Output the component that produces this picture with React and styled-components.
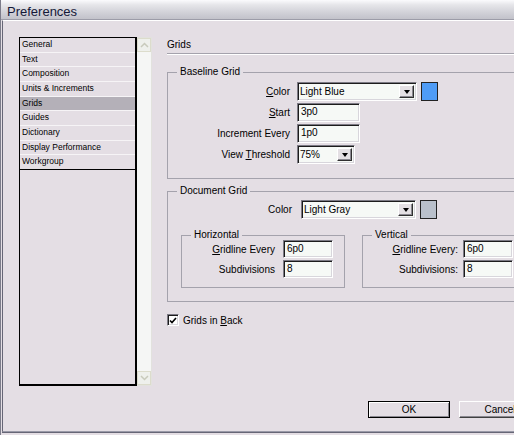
import React from 'react';
import styled, { createGlobalStyle, css } from 'styled-components';

const BG = '#e4dee4';

const GlobalStyle = createGlobalStyle`
  html, body {
    margin: 0;
    padding: 0;
    background: ${BG};
    overflow: hidden;
  }
  body {
    font-family: "Liberation Sans", Arial, sans-serif;
    color: #000;
  }
`;

const sunken = css`
  box-sizing: border-box;
  border-style: solid;
  border-width: 1px;
  border-color: #7c7a84 #ffffff #ffffff #7c7a84;
  box-shadow: inset 1px 1px 0 #1c1c1c, inset -1px -1px 0 #d8d6dc;
`;

const Window = styled.div`
  width: 560px;
  height: 435px;
  box-sizing: border-box;
  display: flex;
  flex-direction: column;
  border-left: 1px solid #7c7c8a;
  background: ${BG};
`;

const TitleBar = styled.div`
  height: 20px;
  flex: none;
  box-sizing: border-box;
  padding: 3px 0 0 6px;
  font-size: 13px;
  line-height: 17px;
  color: #141838;
  background: linear-gradient(#fbfbfd 0%, #e6e6ea 25%, #d4d4da 60%, #c2c2ca 100%);
  border-bottom: 1px solid #9c9ca8;
`;

const Frame = styled.div`
  height: 412px;
  flex: none;
  box-sizing: border-box;
  margin-left: 1px;
  display: flex;
  flex-direction: column;
  border-top: 1px solid #ffffff;
  border-left: 1px solid #666676;
  border-bottom: 1px solid #9a9aa8;
  box-shadow: 0 1px 0 #666676;
`;

const Body = styled.div`
  display: flex;
  padding: 16px 0 0 16px;
`;

const Sidebar = styled.div`
  display: flex;
  height: 349px;
  flex: none;
`;

const List = styled.ul`
  width: 118px;
  margin: 0;
  padding: 0;
  list-style: none;
  box-sizing: border-box;
  border: 1px solid #000;
  border-right-width: 2px;
  border-bottom-width: 2px;
`;

const Item = styled.li`
  height: 13.67px;
  line-height: 13.67px;
  padding-left: 2px;
  font-size: 8.5px;
  white-space: nowrap;
  border-bottom: 1px solid ${(p) => (p.$last ? '#000' : '#f6f4f6')};
  background: ${(p) => (p.$selected ? '#b4b0b8' : 'transparent')};
`;

const ScrollBar = styled.div`
  width: 15px;
  box-sizing: border-box;
  display: flex;
  flex-direction: column;
  justify-content: space-between;
  background: #f5f6f5;
  border: 1px solid #e2e2de;
  border-left: none;
`;

const ScrollArrow = styled.div`
  height: 14px;
  display: flex;
  align-items: center;
  justify-content: center;
  background: #eef0ec;
  border: 1px solid #dcdccc;
  box-sizing: border-box;
`;

const Panel = styled.div`
  width: 374px;
  margin-left: 15px;
  display: flex;
  flex-direction: column;
`;

const PanelTitle = styled.div`
  height: 16px;
  font-size: 10px;
  line-height: 15px;
  border-bottom: 1px solid #a4a2ac;
  box-shadow: 0 1px 0 #ffffff;
`;

const Group = styled.fieldset`
  margin: ${(p) => p.$mt}px 0 0;
  padding: ${(p) => p.$pad};
  min-width: 0;
  width: ${(p) => (p.$w ? `${p.$w}px` : 'auto')};
  box-sizing: border-box;
  border: 1px solid #a4a2ac;
  flex: none;
`;

const Legend = styled.legend`
  margin-left: 9px;
  padding: 0 3px;
  font-size: 10px;
  line-height: ${(p) => p.$lh || 12}px;
`;

const Row = styled.div`
  display: flex;
  align-items: center;
  height: ${(p) => p.$h || 19}px;
  & + & {
    margin-top: ${(p) => (p.$gap === undefined ? 3 : p.$gap)}px;
  }
`;

const Label = styled.label`
  width: ${(p) => p.$w}px;
  margin-right: ${(p) => p.$mr}px;
  flex: none;
  text-align: right;
  font-size: 10px;
  white-space: nowrap;
`;

const TextBox = styled.div`
  ${sunken};
  width: ${(p) => p.$w}px;
  height: 100%;
  padding-left: 3px;
  font-size: 10px;
  line-height: ${(p) => p.$lh || 16}px;
  background: #f6f9f6;
`;

const Select = styled.div`
  ${sunken};
  width: ${(p) => p.$w}px;
  height: 100%;
  display: flex;
  align-items: center;
  justify-content: space-between;
  padding: 2px;
  font-size: 10px;
  background: #f6f9f6;
`;

const DropButton = styled.div`
  width: 15px;
  height: 100%;
  box-sizing: border-box;
  display: flex;
  align-items: center;
  justify-content: center;
  background: #e4e0e4;
  border: 1px solid;
  border-color: #ffffff #303030 #303030 #ffffff;
  box-shadow: inset -1px -1px 0 #8a8890;

  &::after {
    content: '';
    border-left: 3.5px solid transparent;
    border-right: 3.5px solid transparent;
    border-top: 4px solid #000;
  }
`;

const Swatch = styled.div`
  width: 17px;
  height: 19px;
  margin-left: 4px;
  box-sizing: border-box;
  border: 1px solid #222;
  background: ${(p) => p.$color};
`;

const SubGroups = styled.div`
  display: flex;
  gap: 17px;
  margin: 11px 0 0 13px;
`;

const CheckRow = styled.div`
  display: flex;
  align-items: center;
  gap: 4px;
  margin-top: 12px;
  font-size: 10px;
`;

const CheckBox = styled.div`
  ${sunken};
  width: 12px;
  height: 12px;
  background: #ffffff;
  display: flex;
  align-items: center;
  justify-content: center;
`;

const Footer = styled.div`
  display: flex;
  justify-content: flex-end;
  gap: 9px;
  padding-right: 19px;
  margin-top: 15px;
`;

const Button = styled.button`
  width: 82px;
  height: 17px;
  padding: 0;
  box-sizing: border-box;
  font-family: "Liberation Sans", Arial, sans-serif;
  font-size: 10px;
  color: #000;
  background: ${BG};
  border: 1px solid;
  border-color: #ffffff #404040 #404040 #ffffff;
  box-shadow: inset -1px -1px 0 #8a8890;
  ${(p) =>
    p.$default &&
    css`
      border-color: #000;
      box-shadow: inset 1px 1px 0 #ffffff, inset -1px -1px 0 #8a8890;
    `}
`;

const sections = [
  'General',
  'Text',
  'Composition',
  'Units & Increments',
  'Grids',
  'Guides',
  'Dictionary',
  'Display Performance',
  'Workgroup',
];

const Arrow = ({ up }) => (
  <svg width="9" height="6" viewBox="0 0 9 6">
    <polyline
      points={up ? '1,5 4.5,1.5 8,5' : '1,1 4.5,4.5 8,1'}
      fill="none"
      stroke="#c8cabc"
      strokeWidth="1.5"
    />
  </svg>
);

const gridRows = [
  {
    label: (
      <>
        <u>G</u>ridline Every
      </>
    ),
    value: '6p0',
  },
  { label: 'Subdivisions', value: '8' },
];

const SubGroup = ({ title, labelW, mr, colon }) => (
  <Group $mt={0} $w={164} $pad="0 0 9px 0">
    <Legend $lh={10}>{title}</Legend>
    {gridRows.map((r, i) => (
      <Row key={i} $h={18} $gap={2}>
        <Label $w={labelW} $mr={mr}>
          {r.label}
          {colon ? ':' : ''}
        </Label>
        <TextBox $w={50} $lh={15}>
          {r.value}
        </TextBox>
      </Row>
    ))}
  </Group>
);

const App = () => {
  return (
    <>
      <GlobalStyle />
      <Window>
        <TitleBar>Preferences</TitleBar>
        <Frame>
          <Body>
            <Sidebar>
              <List>
                {sections.map((s, i) => (
                  <Item
                    key={s}
                    $selected={s === 'Grids'}
                    $last={i === sections.length - 1}
                  >
                    {s}
                  </Item>
                ))}
              </List>
              <ScrollBar>
                <ScrollArrow>
                  <Arrow up />
                </ScrollArrow>
                <ScrollArrow>
                  <Arrow />
                </ScrollArrow>
              </ScrollBar>
            </Sidebar>

            <Panel>
              <PanelTitle>Grids</PanelTitle>

              <Group $mt={12} $pad="4px 0 14px 0">
                <Legend>Baseline Grid</Legend>
                <Row>
                  <Label $w={122} $mr={7}>
                    <u>C</u>olor
                  </Label>
                  <Select $w={120}>
                    <span>Light Blue</span>
                    <DropButton />
                  </Select>
                  <Swatch $color="#4f9cf6" />
                </Row>
                <Row>
                  <Label $w={122} $mr={7}>
                    <u>S</u>tart
                  </Label>
                  <TextBox $w={63}>3p0</TextBox>
                </Row>
                <Row>
                  <Label $w={122} $mr={7}>
                    Increment Every
                  </Label>
                  <TextBox $w={63}>1p0</TextBox>
                </Row>
                <Row>
                  <Label $w={122} $mr={7}>
                    View <u>T</u>hreshold
                  </Label>
                  <Select $w={58}>
                    <span>75%</span>
                    <DropButton />
                  </Select>
                </Row>
              </Group>

              <Group $mt={6} $pad="3px 0 13px 0">
                <Legend>Document Grid</Legend>
                <Row>
                  <Label $w={124} $mr={9}>
                    Color
                  </Label>
                  <Select $w={115}>
                    <span>Light Gray</span>
                    <DropButton />
                  </Select>
                  <Swatch $color="#b9c0cb" />
                </Row>
                <SubGroups>
                  <SubGroup title="Horizontal" labelW={93} mr={8} />
                  <SubGroup title="Vertical" labelW={95} mr={5} colon />
                </SubGroups>
              </Group>

              <CheckRow>
                <CheckBox>
                  <svg width="8" height="7" viewBox="0 0 8 7">
                    <polyline
                      points="1,3.5 3,5.5 7,1"
                      fill="none"
                      stroke="#000"
                      strokeWidth="1.6"
                    />
                  </svg>
                </CheckBox>
                <span>
                  Grids in <u>B</u>ack
                </span>
              </CheckRow>
            </Panel>
          </Body>

          <Footer>
            <Button $default>OK</Button>
            <Button>Cancel</Button>
          </Footer>
        </Frame>
      </Window>
    </>
  );
};

export default App;
